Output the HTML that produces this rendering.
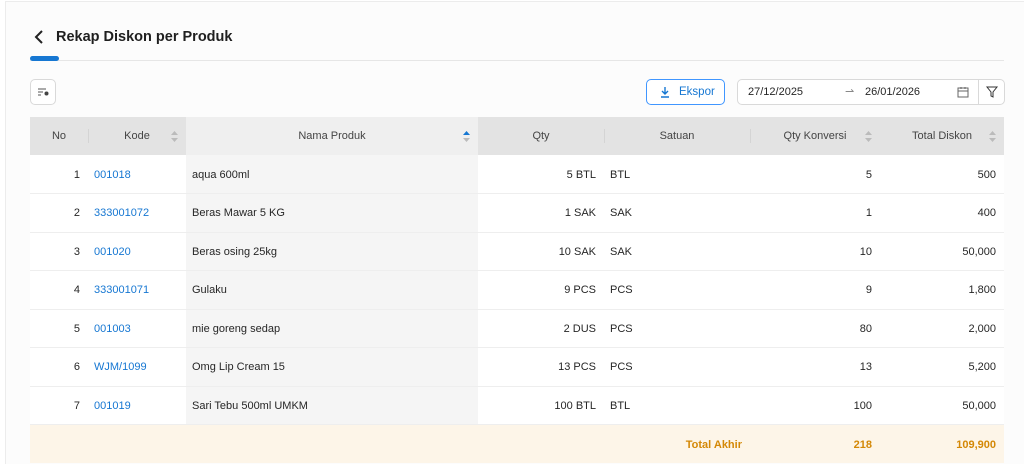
<!DOCTYPE html>
<html><head><style>
*{box-sizing:border-box;margin:0;padding:0}
body{width:1024px;height:464px;overflow:hidden;background:#fff;font-family:"Liberation Sans",sans-serif;font-size:11px;color:#262626;position:relative}
.frame{position:absolute;left:5px;top:1px;right:0;bottom:0;border-left:1px solid #ececec;border-top:1px solid #ececec;background:#fcfcfc}
.title{position:absolute;left:34px;top:29px;font-size:14.5px;font-weight:bold;color:#1f1f1f}
.title span{margin-left:22px}
.back{position:absolute;left:34px;top:30px}
.tabline{position:absolute;left:30px;right:20px;top:60px;border-top:1px solid #e6e6e6}
.tabind{position:absolute;left:30px;top:56px;width:29px;height:5px;border-radius:3px;background:#1677d2}
.btn{position:absolute;border:1px solid #d9d9d9;border-radius:5px;background:#fff}
table{position:absolute;left:30px;top:117px;width:974px;border-collapse:collapse}
th{background:#e3e3e3;font-weight:normal;color:#444;height:38px;position:relative;text-align:center}
td{height:38.5px;border-bottom:1px solid #eeeeee;background:#fff;padding-top:1px}
.nm{background:#f5f5f5}
th.nm{background:#efefef}
.r{text-align:right;padding-right:8px}
.l{padding-left:6px}
a{color:#1677d2;text-decoration:none}
.sort{position:absolute;right:8px;top:14px;width:7px;height:11px}
.sep{position:absolute;left:0;top:12px;height:14px;border-left:1px solid #d4d4d4}
.tot td{background:#fdf5e8;color:#d48806;font-weight:bold;border:none}
</style></head><body>
<div class="frame"></div>
<svg class="back" width="10" height="14" viewBox="0 0 10 14"><path d="M8 1L2 7l6 6" stroke="#222" stroke-width="2" fill="none"/></svg>
<div class="title"><span>Rekap Diskon per Produk</span></div>
<div class="tabline"></div><div class="tabind"></div>
<div class="btn" style="left:30px;top:79px;width:26px;height:26px"><svg width="24" height="24" viewBox="0 0 24 24"><path d="M7 9h8M7 12h5M7 15h3" stroke="#555" stroke-width="1"/><circle cx="15.5" cy="13.5" r="2" fill="#444"/></svg></div>
<div class="btn" style="left:646px;top:79px;width:79px;height:26px;border-color:#4096ff;color:#1677d2;font-size:11.5px;line-height:24px;padding-left:32px">Ekspor<svg style="position:absolute;left:13px;top:6px" width="10" height="12" viewBox="0 0 10 12"><path d="M5 1v7M2 5l3 3 3-3M1 11h8" stroke="#1677d2" stroke-width="1.4" fill="none"/></svg></div>
<div class="btn" style="left:737px;top:79px;width:268px;height:26px;line-height:24px;font-size:11px">
<span style="position:absolute;left:10px">27/12/2025</span><span style="position:absolute;left:107px;color:#888">⇀</span><span style="position:absolute;left:127px">26/01/2026</span>
<svg style="position:absolute;left:219px;top:6px" width="12" height="12" viewBox="0 0 12 12"><rect x="1" y="2" width="10" height="9" stroke="#666" fill="none"/><path d="M1 5h10M4 1v2M8 1v2" stroke="#666"/></svg>
<div style="position:absolute;left:240px;top:0;bottom:0;border-left:1px solid #d9d9d9"></div>
<svg style="position:absolute;left:247px;top:5px" width="14" height="14" viewBox="0 0 14 14"><path d="M2 2h10L8 7v5L6 11V7z" stroke="#333" fill="none"/></svg>
</div>
<table>
<colgroup><col style="width:58px"><col style="width:98px"><col style="width:292px"><col style="width:126px"><col style="width:146px"><col style="width:130px"><col style="width:124px"></colgroup>
<tr><th>No</th><th><div class="sep"></div>Kode<svg class="sort" viewBox="0 0 7 11"><path d="M3.5 0L7 4H0zM3.5 11L0 7h7z" fill="#bbb"/></svg></th><th class="nm">Nama Produk<svg class="sort" viewBox="0 0 7 11"><path d="M3.5 0L7 4H0z" fill="#1677d2"/><path d="M3.5 11L0 7h7z" fill="#bbb"/></svg></th><th>Qty</th><th><div class="sep"></div>Satuan</th><th><div class="sep"></div>Qty Konversi<svg class="sort" viewBox="0 0 7 11"><path d="M3.5 0L7 4H0zM3.5 11L0 7h7z" fill="#bbb"/></svg></th><th>Total Diskon<svg class="sort" viewBox="0 0 7 11"><path d="M3.5 0L7 4H0zM3.5 11L0 7h7z" fill="#bbb"/></svg></th></tr>
<tr><td class="r">1</td><td class="l"><a>001018</a></td><td class="nm l">aqua 600ml</td><td class="r">5 BTL</td><td class="l">BTL</td><td class="r">5</td><td class="r">500</td></tr>
<tr><td class="r">2</td><td class="l"><a>333001072</a></td><td class="nm l">Beras Mawar 5 KG</td><td class="r">1 SAK</td><td class="l">SAK</td><td class="r">1</td><td class="r">400</td></tr>
<tr><td class="r">3</td><td class="l"><a>001020</a></td><td class="nm l">Beras osing 25kg</td><td class="r">10 SAK</td><td class="l">SAK</td><td class="r">10</td><td class="r">50,000</td></tr>
<tr><td class="r">4</td><td class="l"><a>333001071</a></td><td class="nm l">Gulaku</td><td class="r">9 PCS</td><td class="l">PCS</td><td class="r">9</td><td class="r">1,800</td></tr>
<tr><td class="r">5</td><td class="l"><a>001003</a></td><td class="nm l">mie goreng sedap</td><td class="r">2 DUS</td><td class="l">PCS</td><td class="r">80</td><td class="r">2,000</td></tr>
<tr><td class="r">6</td><td class="l"><a>WJM/1099</a></td><td class="nm l">Omg Lip Cream 15</td><td class="r">13 PCS</td><td class="l">PCS</td><td class="r">13</td><td class="r">5,200</td></tr>
<tr><td class="r">7</td><td class="l"><a>001019</a></td><td class="nm l">Sari Tebu 500ml UMKM</td><td class="r">100 BTL</td><td class="l">BTL</td><td class="r">100</td><td class="r">50,000</td></tr>
<tr class="tot"><td></td><td></td><td></td><td></td><td class="r">Total Akhir</td><td class="r">218</td><td class="r">109,900</td></tr>
</table>
</body></html>
